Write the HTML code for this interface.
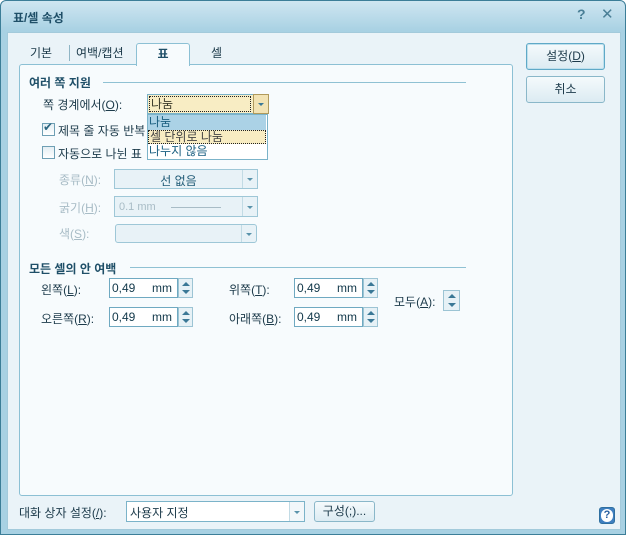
<!DOCTYPE html>
<html><head><meta charset="utf-8"><style>
*{margin:0;padding:0;box-sizing:border-box}
body{width:626px;height:535px;overflow:hidden;font-family:"Liberation Sans","Noto Sans CJK KR","NanumGothic",sans-serif;font-size:12px;color:#1c3a4a;background:#fff}
.a{position:absolute;white-space:nowrap}
#win{position:absolute;left:0;top:0;width:626px;height:535px;border:1px solid #3c7e98;border-radius:6px 6px 0 0;background:linear-gradient(#cfe6f1,#a8d1e3 30px,#a8d1e3);}
#body{position:absolute;left:6px;top:31px;width:614px;height:498px;background:#eaf3f8;border:1px solid #a3cadb}
#panel{position:absolute;left:18px;top:63px;width:494px;height:432px;background:#f7fbfd;border:1px solid #8cc0d4;border-radius:3px}
.g{position:absolute;height:1px;background:#8fc1d3}
.b{font-weight:bold;color:#1f4f68}
.dis{color:#a8bcc6}
.combo{position:absolute;border:1px solid #9ec7d7;background:#e8f2f7}
.arr{position:absolute;right:0;top:0;bottom:0;width:15px;border-left:1px solid #c2dbe5}
.arr:after{content:"";position:absolute;left:4px;top:50%;margin-top:-1px;border-left:3px solid transparent;border-right:3px solid transparent;border-top:3px solid #5a93ab}
.inp{position:absolute;border:1px solid #6fa9c1;background:#fff;width:69px;height:20px;font-size:12px;color:#12384a}
.sp{position:absolute;width:15px;height:20px;border:1px solid #9cc4d4;background:#e6f1f6}
.sp i{position:absolute;left:3px;border-left:4px solid transparent;border-right:4px solid transparent}
.btn{position:absolute;border:1px solid #8ab7c9;border-radius:3px;background:linear-gradient(#f5fafc,#dcebf2);text-align:center;color:#1c3a4a}
.cb{position:absolute;width:13px;height:13px;border:1px solid #6e9fb4;background:linear-gradient(#e4eef3,#fff)}
u{text-decoration:underline}
</style></head><body>
<div id="win">
<div class="a b" style="left:12px;top:8px;font-size:12px;color:#1f4f68">표/셀 속성</div>
<div class="a" style="left:576px;top:5px;font-size:14px;color:#4a7f96;font-weight:bold">?</div>
<div class="a" style="left:600px;top:4px;font-size:15px;color:#4a7f96">✕</div>
<div id="body"></div>
<div class="a" style="left:29px;top:43px;color:#1c3a4a">기본</div>
<div class="a" style="left:68px;top:44px;width:1px;height:16px;background:#8fb5c5"></div>
<div class="a" style="left:75px;top:43px;color:#1c3a4a">여백/캡션</div>
<div class="a" style="left:210px;top:43px;color:#1c3a4a">셀</div>
<div id="panel"></div>
<div class="a" style="left:135px;top:42px;width:54px;height:23px;background:#f7fbfd;border:1px solid #8cc0d4;border-bottom:none;border-radius:3px 3px 0 0;text-align:center;line-height:20px;font-weight:bold;color:#1f4f68">표</div>

<div class="a b" style="left:28px;top:73px">여러 쪽 지원</div>
<div class="g" style="left:102px;top:81px;width:363px"></div>
<div class="a" style="left:42px;top:95px">쪽 경계에서(<u>O</u>):</div>
<div class="a" style="left:146px;top:93px;width:122px;height:20px;border:1px solid #7bb3c9;background:#f8edc4"></div>
<div class="a" style="left:148px;top:95px;width:102px;height:16px;border:1px dotted #222;padding-left:1px;line-height:14px;color:#3a3a2a">나눔</div>
<div class="a" style="left:252px;top:93px;width:16px;height:20px;border:1px solid #b09a5c;background:#f2e3b4"></div>
<div class="a" style="left:257px;top:102px;border-left:3px solid transparent;border-right:3px solid transparent;border-top:3px solid #3a7896"></div>
<div class="a" style="left:146px;top:113px;width:121px;height:46px;border:1px solid #7bb3c9;background:#fff"></div>
<div class="a" style="left:147px;top:114px;width:118px;height:15px;background:#abd2e6;color:#1a5f80;line-height:15px;padding-left:1px">나눔</div>
<div class="a" style="left:147px;top:129px;width:118px;height:14px;background:#f8ecc2;border:1px dotted #222;color:#444;line-height:12px;padding-left:1px">셀 단위로 나눔</div>
<div class="a" style="left:148px;top:143px;color:#1a5f80;line-height:14px">나누지 않음</div>
<div class="cb" style="left:41px;top:122px"></div>
<div class="a" style="left:42px;top:119px;font-size:12px;color:#2a6580">✔</div>
<div class="a" style="left:57px;top:121px">제목 줄 자동 반복</div>
<div class="cb" style="left:41px;top:145px"></div>
<div class="a" style="left:57px;top:144px">자동으로 나뉜 표</div>

<div class="a dis" style="left:58px;top:170px">종류(<u>N</u>):</div>
<div class="combo" style="left:113px;top:168px;width:144px;height:20px"><div class="arr"></div><div style="position:absolute;left:0;right:15px;text-align:center;top:2px;color:#1f5a76">선 없음</div></div>
<div class="a dis" style="left:58px;top:198px">굵기(<u>H</u>):</div>
<div class="combo" style="left:113px;top:195px;width:144px;height:21px"><div class="arr"></div><div style="position:absolute;left:4px;top:4px;font-size:11px;color:#a8bcc6">0.1 mm</div><div style="position:absolute;left:56px;top:10px;width:50px;height:1px;background:#a8bcc6"></div></div>
<div class="a dis" style="left:58px;top:224px">색(<u>S</u>):</div>
<div class="combo" style="left:114px;top:223px;width:142px;height:19px;border-radius:3px"><div class="arr"></div></div>

<div class="a b" style="left:28px;top:259px">모든 셀의 안 여백</div>
<div class="g" style="left:129px;top:266px;width:336px"></div>

<div class="a" style="left:40px;top:280px">왼쪽(<u>L</u>):</div>
<div class="a" style="left:228px;top:280px">위쪽(<u>T</u>):</div>
<div class="a" style="left:40px;top:309px">오른쪽(<u>R</u>):</div>
<div class="a" style="left:228px;top:309px">아래쪽(<u>B</u>):</div>
<div class="a" style="left:393px;top:292px">모두(<u>A</u>):</div>

<div class="inp" style="left:108px;top:277px"><span class="a" style="left:2px;top:2px">0,49</span><span class="a" style="left:42px;top:2px">mm</span></div>
<div class="inp" style="left:293px;top:277px"><span class="a" style="left:2px;top:2px">0,49</span><span class="a" style="left:42px;top:2px">mm</span></div>
<div class="inp" style="left:108px;top:306px"><span class="a" style="left:2px;top:2px">0,49</span><span class="a" style="left:42px;top:2px">mm</span></div>
<div class="inp" style="left:293px;top:306px"><span class="a" style="left:2px;top:2px">0,49</span><span class="a" style="left:42px;top:2px">mm</span></div>
<div class="sp" style="left:177px;top:277px"><i style="top:3px;border-bottom:4px solid #3a7896"></i><i style="top:11px;border-top:4px solid #3a7896"></i></div>
<div class="sp" style="left:362px;top:277px"><i style="top:3px;border-bottom:4px solid #3a7896"></i><i style="top:11px;border-top:4px solid #3a7896"></i></div>
<div class="sp" style="left:177px;top:306px"><i style="top:3px;border-bottom:4px solid #3a7896"></i><i style="top:11px;border-top:4px solid #3a7896"></i></div>
<div class="sp" style="left:362px;top:306px"><i style="top:3px;border-bottom:4px solid #3a7896"></i><i style="top:11px;border-top:4px solid #3a7896"></i></div>
<div class="sp" style="left:442px;top:289px;width:17px;height:21px"><i style="top:3px;left:4px;border-bottom:4px solid #3a7896"></i><i style="top:12px;left:4px;border-top:4px solid #3a7896"></i></div>

<div class="btn" style="left:525px;top:42px;width:79px;height:27px;line-height:24px;border:1px solid #5fa9c7;box-shadow:inset 0 0 0 1px #bfe0ed">설정(<u>D</u>)</div>
<div class="btn" style="left:525px;top:75px;width:79px;height:27px;line-height:24px">취소</div>

<div class="a" style="left:18px;top:503px">대화 상자 설정(<u>/</u>):</div>
<div class="a" style="left:125px;top:500px;width:179px;height:21px;border:1px solid #7bb3c9;background:#fff"><span class="a" style="left:3px;top:2px">사용자 지정</span><div class="arr" style="background:#f2f7fa"></div></div>
<div class="btn" style="left:313px;top:500px;width:61px;height:21px;line-height:19px">구성(<u>;</u>)...</div>
<div class="a" style="left:598px;top:506px;width:16px;height:17px;border:1px solid #2f6fa0;background:#3f7fc0;border-radius:3px"><div style="position:absolute;left:1px;top:1px;width:12px;height:13px;border-radius:6px;background:#fff;color:#2a60a0;font-size:11px;font-weight:bold;text-align:center;line-height:13px">?</div></div>
</div>
</body></html>
